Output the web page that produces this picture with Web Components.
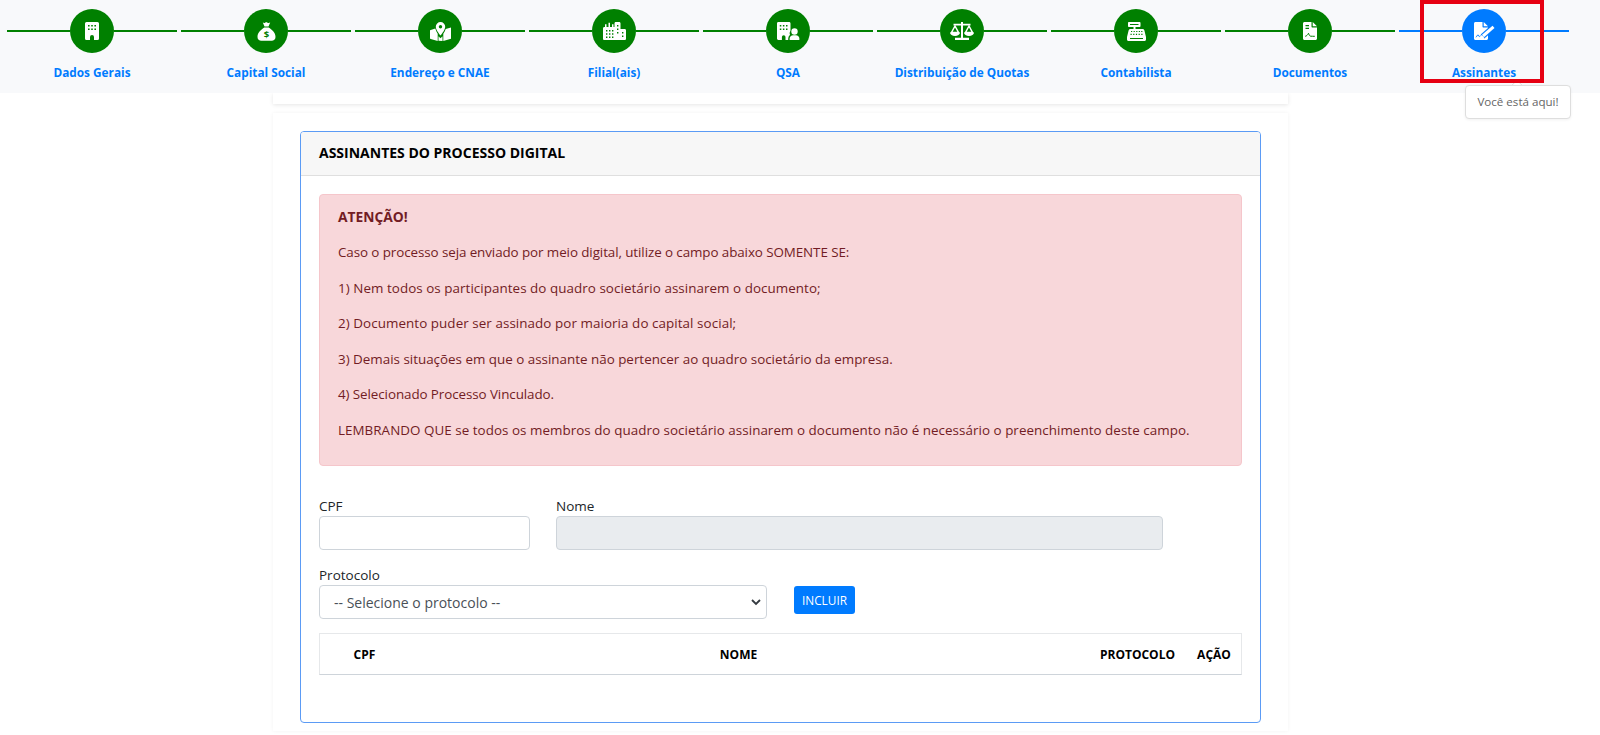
<!DOCTYPE html>
<html lang="pt-BR">
<head>
<meta charset="utf-8">
<title>Assinantes</title>
<style>
  html, body { margin: 0; padding: 0; background: #fff; }
  body { font-family: "Open Sans", "Noto Sans", sans-serif; font-size: 13.4px; color: #212529; height: 735px; overflow: hidden; }
</style>
</head>
<body>
<app-page>
  <step-bar>
    <wizard-step label="Dados Gerais" icon="building"></wizard-step>
    <wizard-step label="Capital Social" icon="money"></wizard-step>
    <wizard-step label="Endereço e CNAE" icon="map"></wizard-step>
    <wizard-step label="Filial(ais)" icon="city"></wizard-step>
    <wizard-step label="QSA" icon="user"></wizard-step>
    <wizard-step label="Distribuição de Quotas" icon="scale"></wizard-step>
    <wizard-step label="Contabilista" icon="register"></wizard-step>
    <wizard-step label="Documentos" icon="pdf"></wizard-step>
    <wizard-step label="Assinantes" icon="sign" active></wizard-step>
  </step-bar>
  <main-panel>
    <signers-card title="ASSINANTES DO PROCESSO DIGITAL">
      <alert-box heading="ATENÇÃO!">
        <p style="letter-spacing:-.085px">Caso o processo seja enviado por meio digital, utilize o campo abaixo SOMENTE SE:</p>
        <p style="letter-spacing:.055px">1) Nem todos os participantes do quadro societário assinarem o documento;</p>
        <p style="letter-spacing:.07px">2) Documento puder ser assinado por maioria do capital social;</p>
        <p>3) Demais situações em que o assinante não pertencer ao quadro societário da empresa.</p>
        <p style="letter-spacing:-.08px">4) Selecionado Processo Vinculado.</p>
        <p style="letter-spacing:.045px">LEMBRANDO QUE se todos os membros do quadro societário assinarem o documento não é necessário o preenchimento deste campo.</p>
      </alert-box>
      <signer-form></signer-form>
      <signers-table></signers-table>
    </signers-card>
  </main-panel>
</app-page>

<script>
const ICONS = {
  building: `<svg width="14" height="18" viewBox="0 0 14 18"><path fill="#fff" d="M1.500 0h11A1.500 1.500 0 0 1 14 1.500v15a1.500 1.500 0 0 1-1.500 1.500H9v-3a2 2 0 0 0-4 0v3H1.500A1.500 1.500 0 0 1 0 16.500v-15A1.500 1.500 0 0 1 1.500 0z"/><path fill="#008000" d="M3 3h1.600v1.600H3zM6.200 3h1.600v1.600H6.200zM9.400 3H11v1.600H9.400zM3 6.500h1.600v1.600H3zM6.200 6.500h1.600v1.600H6.200zM9.400 6.500H11v1.600H9.400z"/></svg>`,
  money: `<svg width="19" height="19" viewBox="0 0 19 19"><path fill="#fff" d="M5.800 .6c1 .5 1.500.6 2.300.1.800-.5 1.600-.5 2.400 0 .8.500 1.500.4 2.700-.1l-1.700 4H7.500z"/><path fill="#fff" d="M7.300 5.600h4.400c3 2 6.800 5 6.800 9.400 0 2.500-1.800 3.800-3.800 3.800H4.300C2.300 18.800.5 17.500.5 15c0-4.400 3.800-7.400 6.800-9.400z"/><text x="9.500" y="15.800" text-anchor="middle" font-family="Open Sans, sans-serif" font-weight="700" font-size="9.500" fill="#008000">$</text></svg>`,
  map: `<svg width="21" height="19" viewBox="0 0 21 19"><path fill="#fff" d="M0 8.200 5.300 6.500c.5 2 1.400 3.800 2.400 5.200V19L.7 17A1 1 0 0 1 0 16zM13.300 11.700c1-1.300 1.900-2.900 2.400-4.700L21 5.500v11.300L13.300 19z"/><path fill="#fff" d="M10.500 0a4.700 4.700 0 0 1 4.700 4.700c0 2.700-3 6.800-4.700 8.800-1.700-2-4.700-6.100-4.700-8.800A4.700 4.700 0 0 1 10.500 0zm-2 14.300 2 2 2-2V19l-4-.2z"/><circle cx="10.500" cy="4.800" r="1.700" fill="#008000"/></svg>`,
  city: `<svg width="23" height="18" viewBox="0 0 23 18"><path fill="#fff" d="M0 6.500C0 5.700.6 5 1.300 5H2V2.200h1.500V5h2V.7h1.500V5h2V2.200h1.500V5h1V1.300C11.500.6 12.100 0 12.800 0h3.400c.7 0 1.300.6 1.300 1.300V7h4.200c.7 0 1.300.6 1.300 1.300v8.400c0 .7-.6 1.300-1.300 1.300H1.300C.6 18 0 17.400 0 16.700z"/><path fill="#008000" d="M3 8h1.400v1.600H3zM6 8h1.400v1.600H6zM9 8h1.400v1.600H9zM3 11.200h1.400v1.600H3zM6 11.200h1.400v1.600H6zM9 11.200h1.400v1.600H9zM3 14.400h1.400V16H3zM6 14.400h1.400V16H6zM9 14.400h1.400V16H9zM14 3h1.400v1.600H14zM14 6.500h1.400v1.600H14zM14 10h1.400v1.600H14zM19 10h1.400v1.600H19zM19 13.500h1.400v1.600H19z"/></svg>`,
  user: `<svg width="23" height="18" viewBox="0 0 23 18"><path fill="#fff" d="M1.400 0h10.700c.8 0 1.400.6 1.400 1.400V8.600A5 5 0 0 0 13 13c-1.300.8-1.800 2.500-1.800 5H8.500v-3a1.800 1.800 0 0 0-3.600 0v3H1.400C.6 18 0 17.400 0 16.600V1.400C0 .6.600 0 1.400 0z"/><path fill="#008000" d="M2.800 3h1.500v1.500H2.800zM5.900 3h1.500v1.500H5.900zM9 3h1.500v1.500H9zM2.800 6.400h1.500v1.500H2.800zM5.900 6.400h1.500v1.500H5.900zM9 6.400h1.500v1.500H9z"/><circle cx="17.500" cy="9.500" r="3.200" fill="#fff"/><path fill="#fff" d="M12.500 17.200c0-2.400 1.800-3.900 3.600-3.900h2.800c1.800 0 3.600 1.500 3.600 3.900 0 .5-.3.800-.8.800H13.300c-.5 0-.8-.3-.8-.8z"/></svg>`,
  scale: `<svg width="24" height="18" viewBox="0 0 24 18"><path fill="#fff" d="M11 0h2v1.700h7.500v1.800H13V15.700h6V18H5v-2.300h6V3.500H3.500V1.700H11z"/><path fill="none" stroke="#fff" stroke-width="1.500" d="M5 4 1.500 10.500h7zM19 4l-3.500 6.500h7z"/><path fill="#fff" d="M0 10.500h10C9.800 12.700 7.800 14 5 14s-4.800-1.300-5-3.500zM14 10.500h10c-.2 2.200-2.200 3.500-5 3.500s-4.800-1.300-5-3.500z"/></svg>`,
  register: `<svg width="19" height="19" viewBox="0 0 19 19"><path fill="#fff" d="M2 0h10.500c.5 0 1 .4 1 1v3c0 .6-.5 1-1 1H8.500v2h7c1 0 1.700.6 1.900 1.500L19 15v2.500c0 .8-.7 1.500-1.500 1.500h-16C.7 19 0 18.300 0 17.500V15l1.600-6.500C1.800 7.600 2.500 7 3.500 7h3V5H2c-.5 0-1-.4-1-1V1c0-.6.500-1 1-1z"/><path fill="#008000" d="M3 2h8.500v1H3zM3 16h13v1H3zM4 9h1.200v1.100H4zM6.600 9h1.200v1.100H6.600zM9.200 9h1.200v1.100H9.200zM11.800 9H13v1.100h-1.200zM14.200 9h1.200v1.100h-1.200zM3.500 11.800h1.200v1.100H3.500zM6.200 11.800h1.200v1.100H6.200zM8.900 11.800h1.200v1.100H8.900zM11.600 11.800h1.200v1.100h-1.200zM14.300 11.800h1.200v1.100h-1.200z"/></svg>`,
  pdf: `<svg width="14" height="18" viewBox="0 0 14 18"><path fill="#fff" d="M1.500 0H8.500V4.500c0 .6.400 1 1 1H14v11c0 .8-.7 1.500-1.500 1.500h-11C.7 18 0 17.300 0 16.500v-15C0 .7.700 0 1.500 0zM9.700 0 14 4.300H9.700z"/><path fill="#008000" d="M2.500 3h3.500v1.200H2.500zM2.500 5.800h3.500V7H2.500z"/><path fill="none" stroke="#008000" stroke-width="1" d="M2.200 14.300c1.500-.3 2.500-1.500 3.300-3 .6 1.500 1.200 2.700 2 2.900 1.200.4 2.500-.3 4.300.1"/></svg>`,
  sign: `<svg width="21" height="18" viewBox="0 0 21 18"><path fill="#fff" d="M1.500 0H8.500V4.500c0 .6.400 1 1 1H14v11c0 .8-.7 1.500-1.500 1.500h-11C.7 18 0 17.300 0 16.500v-15C0 .7.700 0 1.500 0zM9.700 0 14 4.300H9.700z"/><path fill="none" stroke="#007bff" stroke-width="1" d="M1.800 15.200c1-.3 1.500-2.300 2.200-2.500.6 0 .5 1.800 1.300 1.800.5 0 .8-.8 1.300-.8"/><path fill="none" stroke="#007bff" stroke-width="5.500" d="M8.500 14.500 19.500 4.800"/><path fill="none" stroke="#fff" stroke-width="3" d="M9 14 19.500 4.800"/><path fill="#fff" d="M7 16.300l.7-3.300 2.700 2.700z"/></svg>`
};

class WizardStep extends HTMLElement {
  constructor() {
    super();
    this.attachShadow({ mode: "open" });
  }

  static get styles() {
    return /*css*/ `
      :host {
        --tone: #008000;
        display: block;
        box-sizing: border-box;
        position: relative;
        width: 174px;
        padding: 9px 2px 0;
        text-align: center;
      }
      :host([active]) { --tone: #007bff; }
      .track { display: flex; align-items: center; height: 44px; }
      .line { flex: 1; height: 2px; background: var(--tone); }
      .dot {
        width: 44px;
        height: 44px;
        border-radius: 50%;
        background: var(--tone);
        display: grid;
        place-items: center;
      }
      svg { display: block; }
      .label {
        margin-top: 10px;
        font-size: 11.8px;
        font-weight: 700;
        line-height: 18px;
        color: #007bff;
      }
      .mark {
        position: absolute;
        left: 23px;
        top: 0;
        width: 124px;
        height: 82.5px;
        box-sizing: border-box;
        border: 4px solid #e60012;
        border-top-width: 4.5px;
        pointer-events: none;
        z-index: 3;
      }
      .tip {
        position: absolute;
        left: 68px;
        top: 85px;
        width: 106px;
        height: 34px;
        box-sizing: border-box;
        background: #fff;
        border: 1px solid #dedede;
        border-radius: 4px;
        box-shadow: 0 1px 3px rgba(0,0,0,.06);
        font-size: 11.6px;
        line-height: 32px;
        color: #666;
        white-space: nowrap;
        z-index: 2;
      }
      .tip::before {
        content: "";
        position: absolute;
        left: 47px;
        top: -5px;
        width: 7px;
        height: 7px;
        background: #fff;
        border: 1px solid #dedede;
        border-right: 0;
        border-bottom: 0;
        transform: rotate(45deg);
        clip-path: polygon(0 0, 100% 0, 0 100%);
      }
    `;
  }

  connectedCallback() {
    this.render();
  }

  render() {
    const active = this.hasAttribute("active");
    this.shadowRoot.innerHTML = /*html*/ `
      <style>${WizardStep.styles}</style>
      <div class="track">
        <span class="line"></span>
        <span class="dot">${ICONS[this.getAttribute("icon")]}</span>
        <span class="line"></span>
      </div>
      <div class="label">${this.getAttribute("label")}</div>
      ${active ? `<div class="mark"></div><div class="tip">Você está aqui!</div>` : ""}
    `;
  }
}

class StepBar extends HTMLElement {
  constructor() {
    super();
    this.attachShadow({ mode: "open" });
    this.shadowRoot.innerHTML = /*html*/ `
      <style>
        :host {
          display: flex;
          box-sizing: border-box;
          height: 93px;
          padding-left: 5px;
          background: #f8f9fb;
          position: relative;
          z-index: 1;
        }
      </style>
      <slot></slot>
    `;
  }
}

class MainPanel extends HTMLElement {
  constructor() {
    super();
    this.attachShadow({ mode: "open" });
    this.shadowRoot.innerHTML = /*html*/ `
      <style>
        :host { display: block; width: 1015px; margin-left: 273px; }
        .strip {
          height: 11px;
          background: #fff;
          box-shadow: 0 1px 4px rgba(0,0,0,.1);
        }
        .body {
          margin-top: 9px;
          padding: 18px 27px 8px 27px;
          box-shadow: 0 0 4px rgba(0,0,0,.05);
          background: #fff;
        }
      </style>
      <div class="strip"></div>
      <div class="body"><slot></slot></div>
    `;
  }
}

class SignersCard extends HTMLElement {
  constructor() {
    super();
    this.attachShadow({ mode: "open" });
  }

  connectedCallback() {
    this.shadowRoot.innerHTML = /*html*/ `
      <style>
        :host {
          display: block;
          box-sizing: border-box;
          height: 592px;
          border: 1px solid #5b9bf5;
          border-radius: 4px;
          overflow: hidden;
        }
        header {
          box-sizing: border-box;
          height: 44px;
          padding: 0 18px;
          background: #f7f7f7;
          border-bottom: 1px solid #dfdfdf;
          font-size: 14px;
          font-weight: 700;
          line-height: 42px;
          color: #000;
        }
        .content { padding: 18px 18px 0; }
      </style>
      <header>${this.getAttribute("title")}</header>
      <div class="content"><slot></slot></div>
    `;
  }
}

class AlertBox extends HTMLElement {
  constructor() {
    super();
    this.attachShadow({ mode: "open" });
  }

  connectedCallback() {
    this.shadowRoot.innerHTML = /*html*/ `
      <style>
        :host {
          display: block;
          box-sizing: border-box;
          height: 272px;
          padding: 11px 18px 0;
          background: #f8d7da;
          border: 1px solid #f5c6cb;
          border-radius: 4px;
          color: #721c24;
          line-height: 21px;
        }
        strong { display: block; margin-bottom: 15px; font-size: 13.8px; }
        ::slotted(p) { margin: 0 0 14.6px; white-space: nowrap; }
      </style>
      <strong>${this.getAttribute("heading")}</strong>
      <slot></slot>
    `;
  }
}

class SignerForm extends HTMLElement {
  constructor() {
    super();
    this.attachShadow({ mode: "open" });
    this.shadowRoot.innerHTML = /*html*/ `
      <style>
        :host { display: block; margin-top: 30px; }
        .row { display: flex; align-items: flex-end; }
        .row + .row { margin-top: 15px; }
        label { display: block; line-height: 20px; height: 20px; color: #212529; font-size: 13.5px; }
        input, select {
          display: block;
          box-sizing: border-box;
          height: 34px;
          border: 1px solid #ced4da;
          border-radius: 4px;
          background: #fff;
          font: inherit;
          color: #495057;
          margin: 0;
          outline: 0;
        }
        .cpf input { width: 211px; }
        .nome { margin-left: 26px; }
        .nome input { width: 607px; background: #e9ecef; }
        .sel { position: relative; }
        select {
          width: 448px;
          padding: 0 24px 0 14px;
          font-size: 14px;
          appearance: none;
          -webkit-appearance: none;
        }
        .chev { position: absolute; right: 6px; bottom: 13px; pointer-events: none; }
        button {
          box-sizing: border-box;
          width: 61px;
          height: 28px;
          margin: 0 0 5px 27px;
          padding: 0;
          border: 0;
          border-radius: 3px;
          background: #007bff;
          color: #fff;
          font: inherit;
          font-size: 11.8px;
        }
      </style>
      <div class="row">
        <div class="cpf"><label>CPF</label><input type="text"></div>
        <div class="nome"><label>Nome</label><input type="text" disabled></div>
      </div>
      <div class="row">
        <div class="sel">
          <label>Protocolo</label>
          <select><option>-- Selecione o protocolo --</option></select>
          <svg class="chev" width="10" height="7" viewBox="0 0 10 7"><path fill="none" stroke="#343a40" stroke-width="1.800" d="M1 1l4 4 4-4"/></svg>
        </div>
        <button type="button">INCLUIR</button>
      </div>
    `;
  }
}

class SignersTable extends HTMLElement {
  constructor() {
    super();
    this.attachShadow({ mode: "open" });
    this.shadowRoot.innerHTML = /*html*/ `
      <style>
        :host {
          display: grid;
          grid-template-columns: 89px 659px 119px 1fr;
          align-items: center;
          box-sizing: border-box;
          width: 923px;
          height: 42px;
          margin-top: 14px;
          border: 1px solid #e6e8ea;
          border-bottom-color: #ced4da;
          color: #000;
          font-size: 12px;
          font-weight: 700;
          text-align: center;
        }
        .r { text-align: right; padding-right: 12px; }
      </style>
      <span>CPF</span>
      <span>NOME</span>
      <span class="r">PROTOCOLO</span>
      <span>AÇÃO</span>
    `;
  }
}

class AppPage extends HTMLElement {
  constructor() {
    super();
    this.attachShadow({ mode: "open" });
    this.shadowRoot.innerHTML = `<style>:host { display: block; }</style><slot></slot>`;
  }
}

customElements.define("wizard-step", WizardStep);
customElements.define("step-bar", StepBar);
customElements.define("main-panel", MainPanel);
customElements.define("signers-card", SignersCard);
customElements.define("alert-box", AlertBox);
customElements.define("signer-form", SignerForm);
customElements.define("signers-table", SignersTable);
customElements.define("app-page", AppPage);
</script>
</body>
</html>
